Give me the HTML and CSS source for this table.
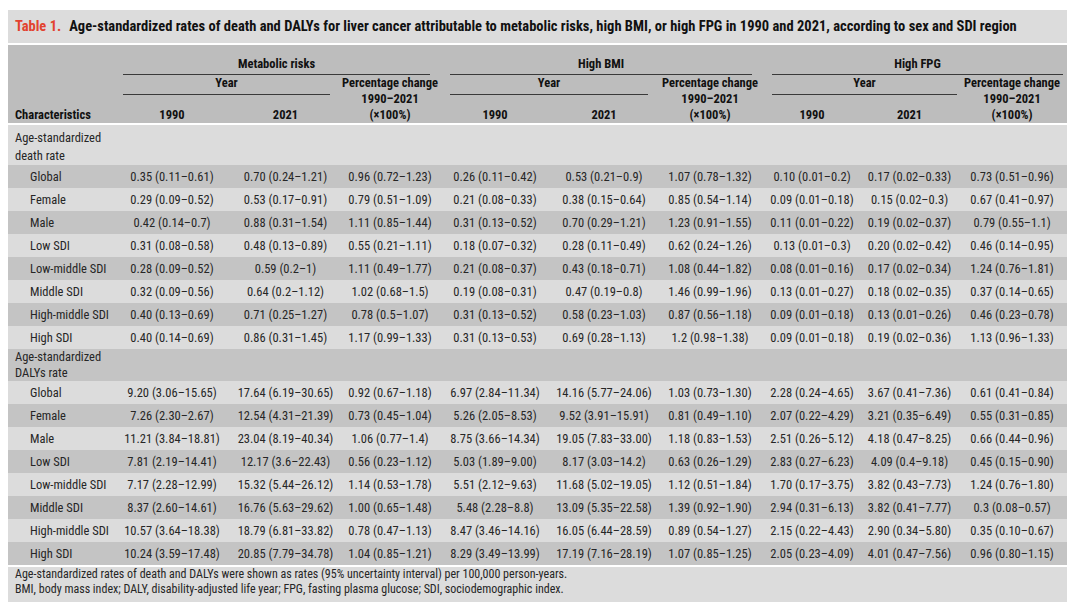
FILE: index.html
```html
<!DOCTYPE html>
<html lang="en">
<head>
<meta charset="utf-8">
<title>Table 1</title>
<link rel="stylesheet" href="styles.css">
</head>
<body>
<div class="panel">
  <div class="caption"><span class="label">Table 1.</span>Age-standardized rates of death and DALYs for liver cancer attributable to metabolic risks, high BMI, or high FPG in 1990 and 2021, according to sex and SDI region</div>
  <table class="data">
    <colgroup>
      <col class="c-char"><col class="c-m90"><col class="c-m21"><col class="c-mp">
      <col class="c-b90"><col class="c-b21"><col class="c-bp">
      <col class="c-f90"><col class="c-f21"><col class="c-fp">
    </colgroup>
    <thead>
      <tr class="h1">
        <th class="char" rowspan="3">Characteristics</th>
        <th colspan="3" class="grp-cell"><div class="rule">Metabolic risks</div></th>
        <th colspan="3" class="grp-cell"><div class="rule">High BMI</div></th>
        <th colspan="3" class="grp-cell last"><div class="rule">High FPG</div></th>
      </tr>
      <tr class="h2">
        <th colspan="2" class="grp-cell"><div class="rule">Year</div></th>
        <th rowspan="2" class="pct">Percentage change<br>1990–2021<br>(×100%)</th>
        <th colspan="2" class="grp-cell"><div class="rule">Year</div></th>
        <th rowspan="2" class="pct">Percentage change<br>1990–2021<br>(×100%)</th>
        <th colspan="2" class="grp-cell last-year"><div class="rule">Year</div></th>
        <th rowspan="2" class="pct">Percentage change<br>1990–2021<br>(×100%)</th>
      </tr>
      <tr class="h3">
        <th>1990</th><th>2021</th>
        <th>1990</th><th>2021</th>
        <th>1990</th><th>2021</th>
      </tr>
    </thead>
    <tbody>
      <tr class="sec sec-first"><td class="sec-label">Age-standardized<br>death rate</td><td colspan="9"></td></tr>
      <tr class="d"><td class="sub">Global</td><td>0.35 (0.11–0.61)</td><td>0.70 (0.24–1.21)</td><td>0.96 (0.72–1.23)</td><td>0.26 (0.11–0.42)</td><td>0.53 (0.21–0.9)</td><td>1.07 (0.78–1.32)</td><td>0.10 (0.01–0.2)</td><td>0.17 (0.02–0.33)</td><td>0.73 (0.51–0.96)</td></tr>
      <tr><td class="sub">Female</td><td>0.29 (0.09–0.52)</td><td>0.53 (0.17–0.91)</td><td>0.79 (0.51–1.09)</td><td>0.21 (0.08–0.33)</td><td>0.38 (0.15–0.64)</td><td>0.85 (0.54–1.14)</td><td>0.09 (0.01–0.18)</td><td>0.15 (0.02–0.3)</td><td>0.67 (0.41–0.97)</td></tr>
      <tr class="d"><td class="sub">Male</td><td>0.42 (0.14–0.7)</td><td>0.88 (0.31–1.54)</td><td>1.11 (0.85–1.44)</td><td>0.31 (0.13–0.52)</td><td>0.70 (0.29–1.21)</td><td>1.23 (0.91–1.55)</td><td>0.11 (0.01–0.22)</td><td>0.19 (0.02–0.37)</td><td>0.79 (0.55–1.1)</td></tr>
      <tr><td class="sub">Low SDI</td><td>0.31 (0.08–0.58)</td><td>0.48 (0.13–0.89)</td><td>0.55 (0.21–1.11)</td><td>0.18 (0.07–0.32)</td><td>0.28 (0.11–0.49)</td><td>0.62 (0.24–1.26)</td><td>0.13 (0.01–0.3)</td><td>0.20 (0.02–0.42)</td><td>0.46 (0.14–0.95)</td></tr>
      <tr class="d"><td class="sub">Low-middle SDI</td><td>0.28 (0.09–0.52)</td><td>0.59 (0.2–1)</td><td>1.11 (0.49–1.77)</td><td>0.21 (0.08–0.37)</td><td>0.43 (0.18–0.71)</td><td>1.08 (0.44–1.82)</td><td>0.08 (0.01–0.16)</td><td>0.17 (0.02–0.34)</td><td>1.24 (0.76–1.81)</td></tr>
      <tr><td class="sub">Middle SDI</td><td>0.32 (0.09–0.56)</td><td>0.64 (0.2–1.12)</td><td>1.02 (0.68–1.5)</td><td>0.19 (0.08–0.31)</td><td>0.47 (0.19–0.8)</td><td>1.46 (0.99–1.96)</td><td>0.13 (0.01–0.27)</td><td>0.18 (0.02–0.35)</td><td>0.37 (0.14–0.65)</td></tr>
      <tr class="d"><td class="sub">High-middle SDI</td><td>0.40 (0.13–0.69)</td><td>0.71 (0.25–1.27)</td><td>0.78 (0.5–1.07)</td><td>0.31 (0.13–0.52)</td><td>0.58 (0.23–1.03)</td><td>0.87 (0.56–1.18)</td><td>0.09 (0.01–0.18)</td><td>0.13 (0.01–0.26)</td><td>0.46 (0.23–0.78)</td></tr>
      <tr><td class="sub">High SDI</td><td>0.40 (0.14–0.69)</td><td>0.86 (0.31–1.45)</td><td>1.17 (0.99–1.33)</td><td>0.31 (0.13–0.53)</td><td>0.69 (0.28–1.13)</td><td>1.2 (0.98–1.38)</td><td>0.09 (0.01–0.18)</td><td>0.19 (0.02–0.36)</td><td>1.13 (0.96–1.33)</td></tr>
      <tr class="sec sec-second d"><td class="sec-label">Age-standardized<br>DALYs rate</td><td colspan="9"></td></tr>
      <tr><td class="sub">Global</td><td>9.20 (3.06–15.65)</td><td>17.64 (6.19–30.65)</td><td>0.92 (0.67–1.18)</td><td>6.97 (2.84–11.34)</td><td>14.16 (5.77–24.06)</td><td>1.03 (0.73–1.30)</td><td>2.28 (0.24–4.65)</td><td>3.67 (0.41–7.36)</td><td>0.61 (0.41–0.84)</td></tr>
      <tr class="d"><td class="sub">Female</td><td>7.26 (2.30–2.67)</td><td>12.54 (4.31–21.39)</td><td>0.73 (0.45–1.04)</td><td>5.26 (2.05–8.53)</td><td>9.52 (3.91–15.91)</td><td>0.81 (0.49–1.10)</td><td>2.07 (0.22–4.29)</td><td>3.21 (0.35–6.49)</td><td>0.55 (0.31–0.85)</td></tr>
      <tr><td class="sub">Male</td><td>11.21 (3.84–18.81)</td><td>23.04 (8.19–40.34)</td><td>1.06 (0.77–1.4)</td><td>8.75 (3.66–14.34)</td><td>19.05 (7.83–33.00)</td><td>1.18 (0.83–1.53)</td><td>2.51 (0.26–5.12)</td><td>4.18 (0.47–8.25)</td><td>0.66 (0.44–0.96)</td></tr>
      <tr class="d"><td class="sub">Low SDI</td><td>7.81 (2.19–14.41)</td><td>12.17 (3.6–22.43)</td><td>0.56 (0.23–1.12)</td><td>5.03 (1.89–9.00)</td><td>8.17 (3.03–14.2)</td><td>0.63 (0.26–1.29)</td><td>2.83 (0.27–6.23)</td><td>4.09 (0.4–9.18)</td><td>0.45 (0.15–0.90)</td></tr>
      <tr><td class="sub">Low-middle SDI</td><td>7.17 (2.28–12.99)</td><td>15.32 (5.44–26.12)</td><td>1.14 (0.53–1.78)</td><td>5.51 (2.12–9.63)</td><td>11.68 (5.02–19.05)</td><td>1.12 (0.51–1.84)</td><td>1.70 (0.17–3.75)</td><td>3.82 (0.43–7.73)</td><td>1.24 (0.76–1.80)</td></tr>
      <tr class="d"><td class="sub">Middle SDI</td><td>8.37 (2.60–14.61)</td><td>16.76 (5.63–29.62)</td><td>1.00 (0.65–1.48)</td><td>5.48 (2.28–8.8)</td><td>13.09 (5.35–22.58)</td><td>1.39 (0.92–1.90)</td><td>2.94 (0.31–6.13)</td><td>3.82 (0.41–7.77)</td><td>0.3 (0.08–0.57)</td></tr>
      <tr><td class="sub">High-middle SDI</td><td>10.57 (3.64–18.38)</td><td>18.79 (6.81–33.82)</td><td>0.78 (0.47–1.13)</td><td>8.47 (3.46–14.16)</td><td>16.05 (6.44–28.59)</td><td>0.89 (0.54–1.27)</td><td>2.15 (0.22–4.43)</td><td>2.90 (0.34–5.80)</td><td>0.35 (0.10–0.67)</td></tr>
      <tr class="d"><td class="sub">High SDI</td><td>10.24 (3.59–17.48)</td><td>20.85 (7.79–34.78)</td><td>1.04 (0.85–1.21)</td><td>8.29 (3.49–13.99)</td><td>17.19 (7.16–28.19)</td><td>1.07 (0.85–1.25)</td><td>2.05 (0.23–4.09)</td><td>4.01 (0.47–7.56)</td><td>0.96 (0.80–1.15)</td></tr>
    </tbody>
  </table>
  <div class="notes">
    <p>Age-standardized rates of death and DALYs were shown as rates (95% uncertainty interval) per 100,000 person-years.</p>
    <p>BMI, body mass index; DALY, disability-adjusted life year; FPG, fasting plasma glucose; SDI, sociodemographic index.</p>
  </div>
</div>
</body>
</html>
```

FILE: styles.css
```css
html, body {
  margin: 0;
  padding: 0;
  background: #ffffff;
}

body {
  font-family: "Roboto", "Liberation Sans", sans-serif;
  font-stretch: condensed;
  color: #222222;
}

.panel {
  width: 1059px;
  margin: 10px 0 0 8px;
  display: flex;
  flex-direction: column;
  gap: 2px;
}

.caption {
  background: #dcdcdc;
  height: 33px;
  line-height: 34px;
  padding-left: 7px;
  font-weight: bold;
  font-size: 14.5px;
  color: #111111;
  white-space: nowrap;
  box-sizing: border-box;
}

.caption .label {
  color: #e2422f;
  margin-right: 8px;
}

.data {
  width: 1059px;
  table-layout: fixed;
  border-collapse: collapse;
  border-spacing: 0;
  font-size: 12.5px;
}

.c-char { width: 105px; }
.c-m90 { width: 118px; }
.c-m21 { width: 109px; }
.c-mp { width: 100px; }
.c-b90 { width: 110px; }
.c-b21 { width: 108px; }
.c-bp { width: 104px; }
.c-f90 { width: 100px; }
.c-f21 { width: 95px; }
.c-fp { width: 110px; }

.data thead th {
  background: #bdbdbd;
  font-weight: bold;
  font-size: 12.5px;
  color: #111111;
  padding: 0;
  line-height: 16px;
  text-align: center;
  white-space: nowrap;
}

.data thead tr.h1 { height: 30px; }
.data thead tr.h2 { height: 20px; }
.data thead tr.h3 { height: 29px; }

.data thead tr.h1 th { vertical-align: top; padding-top: 11px; }
.data thead tr.h2 th { vertical-align: top; }
.data thead tr.h3 th { vertical-align: bottom; padding-bottom: 0; }

.data thead tr.h1 th.char {
  text-align: left;
  vertical-align: bottom;
  padding-top: 0;
  padding-left: 7px;
  padding-bottom: 0;
}

.data thead tr.h2 th.pct {
  vertical-align: top;
  padding-top: 0;
}

.grp-cell .rule {
  margin: 0 10px;
  border-bottom: 1px solid #3a3a3a;
}

.h1 .grp-cell .rule { padding-bottom: 2px; }
.h2 .grp-cell .rule { padding-bottom: 3px; }

.grp-cell.last .rule { margin-right: 4px; }
.grp-cell.last-year .rule { margin-right: 0; }

.data thead {
  border-bottom: 2px solid #ffffff;
}

.data tbody tr {
  background: #dcdcdc;
  height: 23px;
}

.data tbody tr.d {
  background: #c4c4c4;
}

.data tbody td {
  padding: 0;
  text-align: center;
  white-space: nowrap;
  vertical-align: middle;
  color: #262626;
}

.data tbody td.sub {
  text-align: left;
  padding-left: 22px;
}

.data tbody tr.sec td.sec-label {
  text-align: left;
  padding-left: 7px;
  line-height: 18px;
  vertical-align: top;
}

.data tbody tr.sec-first td { padding-top: 4px; }
.data tbody tr.sec-first { height: 40px; }
.data tbody tr.sec-second { height: 32px; }
.data tbody tr.sec-second td.sec-label { line-height: 16px; padding-top: 0; }

.notes {
  background: #dcdcdc;
  padding: 0 0 5px 7px;
  font-size: 12px;
  color: #262626;
}

.notes p {
  margin: 0;
  line-height: 15px;
}
```
